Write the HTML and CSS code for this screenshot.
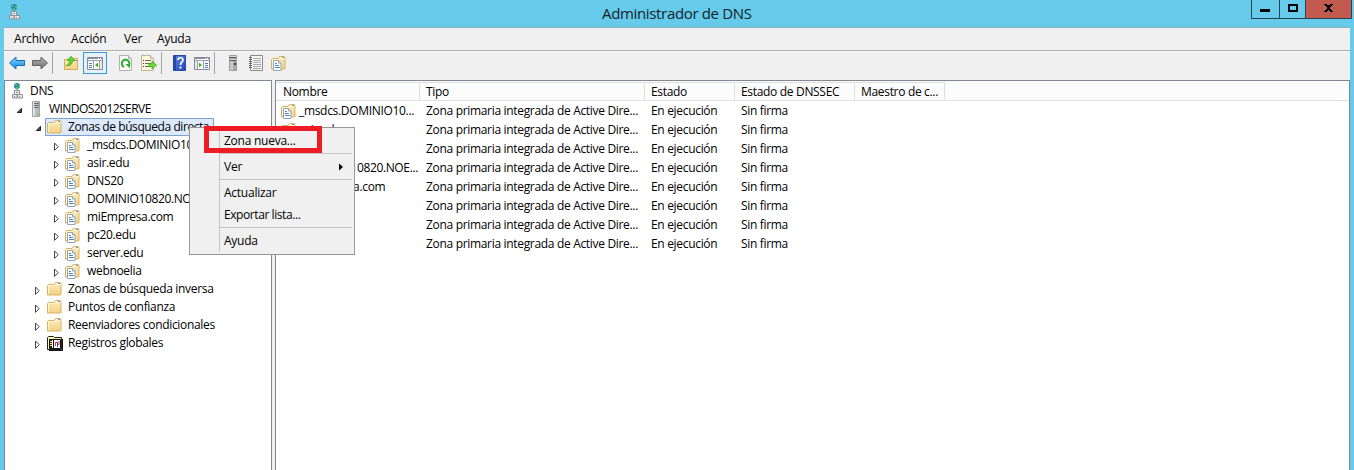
FILE: index.html
```html
<!DOCTYPE html>
<html lang="es">
<head>
<meta charset="utf-8">
<title>Administrador de DNS</title>
<link rel="stylesheet" href="styles.css">
</head>
<body>
<svg class="defs" width="0" height="0">
  <defs>
    <linearGradient id="gold" x1="0" y1="0" x2="0" y2="1"><stop offset="0" stop-color="#fdedb8"/><stop offset="1" stop-color="#f3d184"/></linearGradient>
    <linearGradient id="steel" x1="0" y1="0" x2="1" y2="0"><stop offset="0" stop-color="#d4d7d9"/><stop offset="1" stop-color="#84888b"/></linearGradient>
    <linearGradient id="blue" x1="0" y1="0" x2="0" y2="1"><stop offset="0" stop-color="#7fd4ff"/><stop offset="1" stop-color="#118be0"/></linearGradient>
    <linearGradient id="gray" x1="0" y1="0" x2="0" y2="1"><stop offset="0" stop-color="#b4b4b4"/><stop offset="1" stop-color="#6f6f6f"/></linearGradient>
    <linearGradient id="book" x1="0" y1="0" x2="1" y2="1"><stop offset="0" stop-color="#5d8be6"/><stop offset="1" stop-color="#2145ae"/></linearGradient>
  </defs>
  <symbol id="dns" viewBox="0 0 16 16">
    <circle cx="8" cy="3" r="3" fill="#2a7fb4"/><path d="M6 1h2v2H6zM9 2h2v2H9zM7 4h2v2H7z" fill="#45c35c"/><path d="M8 6v2" stroke="#777"/>
    <path d="M5.500 7.500h5v4h-5zM3.500 11.500h4.500v3.500h-4.500zM8.500 11.500h5v3.500H8.500z" fill="#eceaf0" stroke="#908e97"/><path d="M7 9.500h2M5 13.500h1M10 13.500h1" stroke="#8a8790"/>
  </symbol>
  <symbol id="server" viewBox="0 0 16 16">
    <path d="M4.500.5h7v15h-7z" fill="#b9bcbe" stroke="#a0a4a6"/><path d="M5 1h2v14H5z" fill="#dfe2e3"/><path d="M6 2.500h5M6 4.500h5M6 6.500h5" stroke="#6d7173"/><path d="M9 13h2v1H9z" fill="#66dd27"/>
  </symbol>
  <symbol id="folder" viewBox="0 0 16 16">
    <path d="M.5 4.500l1-1H7l1.500-2h5l.5 1v11l-.5.500H.5z" fill="url(#gold)" stroke="#d9b264"/><path d="M9 2.500h4" stroke="#fff"/><path d="M11 2.500h2" stroke="#579ad2"/><path d="M1.500 13V4.500h6l1-1h5" fill="none" stroke="#fff6d6"/>
  </symbol>
  <symbol id="zone" viewBox="0 0 16 16">
    <path d="M.5 4.500l1-1H7l1.500-2h5l.5 1v11l-.5.500H.5z" fill="url(#gold)" stroke="#d9b264"/><path d="M9 2.500h4" stroke="#fff"/><path d="M11 2.500h2" stroke="#579ad2"/><path d="M1.500 13V4.500h6l1-1h5" fill="none" stroke="#fff6d6"/>
    <path d="M2.500 5.500h5l2.500 2.500v7.500H2.500z" fill="#fff" stroke="#93a5b6"/><path d="M7.500 5.500V8H10" fill="#dce8f2" stroke="#93a5b6"/><path d="M4 8.500h2M4 10.500h4M4 12.500h5" stroke="#4c86c8"/>
  </symbol>
  <symbol id="log" viewBox="0 0 16 16">
    <path d="M.5 2.500l1-1h5l1 1h7v12H.5z" fill="#fff7a8" stroke="#222"/><path d="M2.500 4.500h11v9h-11z" fill="#fff" stroke="#111"/><path d="M3 5h2v8H3z" fill="#222"/><path d="M3 6.500h2M3 8.500h2M3 10.500h2" stroke="#ffe95a"/><path d="M6.500 5v8" stroke="#111"/><path d="M8.500 11V7.500H10" fill="none" stroke="#d32"/><path d="M10.500 12V7" fill="none" stroke="#24c"/><path d="M11 9.500h1V6" fill="none" stroke="#d32"/><path d="M15.500 4v11.500H2" fill="none" stroke="#111"/>
  </symbol>
  <symbol id="back" viewBox="0 0 16 16"><path d="M.5 8L7 2v3.500h8.500v5H7V14z" fill="url(#blue)" stroke="#176fbb"/></symbol>
  <symbol id="forward" viewBox="0 0 16 16"><path d="M15.500 8L9 2v3.500H.5v5H9V14z" fill="url(#gray)" stroke="#636363"/></symbol>
  <symbol id="up" viewBox="0 0 16 16">
    <path d="M1.500 4.500h6l1-1h6v11h-13z" fill="url(#gold)" stroke="#d4ac5e"/><path d="M11 5.500h3" stroke="#5c9ed4"/><path d="M3 10.500c2.500-.5 3.500-2 3.500-5H4L8 1.300l4 4.200H9.500c0 4-2.500 5.500-6.500 5z" fill="#60d52e" stroke="#35a220" stroke-width=".7"/>
  </symbol>
  <symbol id="pane" viewBox="0 0 16 16">
    <path d="M.5 2.500h15v12H.5z" fill="#fff" stroke="#858b99"/><path d="M1 3.500h14" stroke="#858b99"/><path d="M11 3.500h1M13 3.500h1" stroke="#fff"/><path d="M1 5.500h14M6.500 6v9M12.500 6v9" stroke="#9aa0ac"/><path d="M2 8.500h3M2 10.500h3M2 12.500h3" stroke="#467fc2"/><path d="M11 7.500v5L8 10z" fill="#3eaf29"/><path d="M13 6h2v8h-2z" fill="#e8e9eb"/>
  </symbol>
  <symbol id="action" viewBox="0 0 16 16">
    <path d="M.5 2.500h15v12H.5z" fill="#fff" stroke="#858b99"/><path d="M1 3.500h14" stroke="#858b99"/><path d="M11 3.500h1M13 3.500h1" stroke="#fff"/><path d="M1 5.500h14M3.500 6v9M9.500 6v9" stroke="#9aa0ac"/><path d="M1 6h2v8H1z" fill="#e8e9eb"/><path d="M11 8.500h3M11 10.500h3M11 12.500h3" stroke="#467fc2"/><path d="M5 7.500v5L8 10z" fill="#3eaf29"/>
  </symbol>
  <symbol id="refresh" viewBox="0 0 16 16">
    <path d="M1.500.5h9l3 3v12h-12z" fill="#fbfbfb" stroke="#b0b0b0"/><path d="M10.500.5v3h3" fill="#ddd" stroke="#b0b0b0"/><path d="M6 12a3.800 3.800 0 1 1 4.500-1" fill="none" stroke="#2cae2a" stroke-width="2"/><path d="M7.500 9H12v4.500z" fill="#2cae2a"/>
  </symbol>
  <symbol id="export" viewBox="0 0 16 16">
    <path d="M.5.5h9l3 3v12H.5z" fill="#fff7d9" stroke="#bcb596"/><path d="M9.500.5v3h3" fill="#ece2ba" stroke="#bcb596"/><path d="M2 5.500h1M2 8.500h1M2 11.500h1" stroke="#333"/><path d="M4 5.500h6M4 8.500h4M4 11.500h4" stroke="#696969"/><path d="M8 8.500h3V6l4.500 4-4.500 4v-2.500H8z" fill="#69d838" stroke="#3da522" stroke-width=".8"/>
  </symbol>
  <symbol id="help" viewBox="0 0 16 16">
    <path d="M2.500.5h12v15h-12z" fill="url(#book)" stroke="#2748a6"/><path d="M3 1h2v14H3z" fill="#244ba8"/><path d="M7 5c0-3 5-3 5 0 0 2-2.500 2-2.500 5" fill="none" stroke="#fff" stroke-width="1.700"/><path d="M8.500 11.500h2v2h-2z" fill="#fff"/>
  </symbol>
  <symbol id="tower" viewBox="0 0 16 16">
    <path d="M4.500.5h7v15h-7z" fill="#a9a9a9" stroke="#9b9b9b"/><path d="M5 5h3v10H5z" fill="#c8c8c8"/><path d="M5 2.500h6M5 5.500h6" stroke="#555"/><path d="M5 1.500h6M5 4.500h6" stroke="#ddd"/><path d="M9 8h2v2H9z" fill="#444"/>
  </symbol>
  <symbol id="notes" viewBox="0 0 16 16">
    <path d="M2.500.5h12v15h-12z" fill="#f6f6f6" stroke="#8b8b8b"/><path d="M5 3.500h8M5 5.500h8M5 7.500h8M5 9.500h8M5 11.500h8M5 13.500h8" stroke="#aaa"/><path d="M1 2.500h3M1 4.500h3M1 6.500h3M1 8.500h3M1 10.500h3M1 12.500h3" stroke="#666"/>
  </symbol>
  <symbol id="open" viewBox="0 0 8 10"><path d="M6.500 2.300v4.200H2.300z" fill="#555" stroke="#222"/></symbol>
  <symbol id="closed" viewBox="0 0 8 10"><path d="M1.500 1l3.700 3.700-3.700 3.700z" fill="#fff" stroke="#444"/></symbol>
</svg>

<div class="window">
  <header class="titlebar">
    <svg class="icon app-icon"><use href="#dns"/></svg>
    <h1 class="title">Administrador de DNS</h1>
    <div class="controls">
      <span class="control minimize"><i></i></span>
      <span class="control maximize"><i></i></span>
      <span class="control close"><svg width="9" height="8" viewBox="0 0 9 8"><path d="M0 0h3v1h3V0h3v1H8v1H7v1H6v2h1v1h1v1h1v1H6V7H5V6H4v1H3v1H0V7h1V6h1V5h1V3H2V2H1V1H0z"/></svg></span>
    </div>
  </header>

  <div class="frame">
    <nav class="menubar"><span class="m-archivo">Archivo</span><span class="m-accion">Acción</span><span class="m-ver">Ver</span><span>Ayuda</span></nav>
    <div class="toolbar">
      <svg class="icon"><use href="#back"/></svg>
      <svg class="icon gap-next"><use href="#forward"/></svg>
      <b class="sep"></b>
      <svg class="icon gap-up"><use href="#up"/></svg>
      <span class="pressed"><svg class="icon"><use href="#pane"/></svg></span>
      <svg class="icon gap-refresh"><use href="#refresh"/></svg>
      <svg class="icon gap-next"><use href="#export"/></svg>
      <b class="sep"></b>
      <svg class="icon gap-help"><use href="#help"/></svg>
      <svg class="icon gap-tool"><use href="#action"/></svg>
      <b class="sep"></b>
      <svg class="icon gap-tower"><use href="#tower"/></svg>
      <svg class="icon gap-next"><use href="#notes"/></svg>
      <svg class="icon gap-zone"><use href="#zone"/></svg>
    </div>

    <main class="panes">
      <section class="tree">
        <div class="node l0"><svg class="icon"><use href="#dns"/></svg><span class="label">DNS</span></div>
        <div class="node l1"><svg class="arrow"><use href="#open"/></svg><svg class="icon"><use href="#server"/></svg><span class="label server-name">WINDOS2012SERVE</span></div>
        <div class="node l2"><svg class="arrow"><use href="#open"/></svg><span class="selected"><svg class="icon"><use href="#folder"/></svg><span class="label">Zonas de búsqueda directa</span></span></div>
        <div class="node l3"><svg class="arrow"><use href="#closed"/></svg><svg class="icon"><use href="#zone"/></svg><span class="label caps">_msdcs.DOMINIO10820</span></div>
        <div class="node l3"><svg class="arrow"><use href="#closed"/></svg><svg class="icon"><use href="#zone"/></svg><span class="label">asir.edu</span></div>
        <div class="node l3"><svg class="arrow"><use href="#closed"/></svg><svg class="icon"><use href="#zone"/></svg><span class="label caps">DNS20</span></div>
        <div class="node l3"><svg class="arrow"><use href="#closed"/></svg><svg class="icon"><use href="#zone"/></svg><span class="label caps">DOMINIO10820.NOELIA</span></div>
        <div class="node l3"><svg class="arrow"><use href="#closed"/></svg><svg class="icon"><use href="#zone"/></svg><span class="label">miEmpresa.com</span></div>
        <div class="node l3"><svg class="arrow"><use href="#closed"/></svg><svg class="icon"><use href="#zone"/></svg><span class="label">pc20.edu</span></div>
        <div class="node l3"><svg class="arrow"><use href="#closed"/></svg><svg class="icon"><use href="#zone"/></svg><span class="label">server.edu</span></div>
        <div class="node l3"><svg class="arrow"><use href="#closed"/></svg><svg class="icon"><use href="#zone"/></svg><span class="label">webnoelia</span></div>
        <div class="node l2"><svg class="arrow"><use href="#closed"/></svg><svg class="icon"><use href="#folder"/></svg><span class="label">Zonas de búsqueda inversa</span></div>
        <div class="node l2"><svg class="arrow"><use href="#closed"/></svg><svg class="icon"><use href="#folder"/></svg><span class="label">Puntos de confianza</span></div>
        <div class="node l2"><svg class="arrow"><use href="#closed"/></svg><svg class="icon"><use href="#folder"/></svg><span class="label">Reenviadores condicionales</span></div>
        <div class="node l2"><svg class="arrow"><use href="#closed"/></svg><svg class="icon"><use href="#log"/></svg><span class="label">Registros globales</span></div>
      </section>

      <section class="list">
        <div class="row head"><span>Nombre</span><span>Tipo</span><span>Estado</span><span>Estado de DNSSEC</span><span>Maestro de c...</span></div>
        <div class="row"><span class="name"><svg class="icon"><use href="#zone"/></svg>_msdcs.DOMINIO10...</span><span>Zona primaria integrada de Active Dire...</span><span>En ejecución</span><span>Sin firma</span></div>
        <div class="row"><span class="name"><svg class="icon"><use href="#zone"/></svg>asir.edu</span><span>Zona primaria integrada de Active Dire...</span><span>En ejecución</span><span>Sin firma</span></div>
        <div class="row"><span class="name"><svg class="icon"><use href="#zone"/></svg>DNS20</span><span>Zona primaria integrada de Active Dire...</span><span>En ejecución</span><span>Sin firma</span></div>
        <div class="row"><span class="name caps"><svg class="icon"><use href="#zone"/></svg>DOMINIO10820.NOE...</span><span>Zona primaria integrada de Active Dire...</span><span>En ejecución</span><span>Sin firma</span></div>
        <div class="row"><span class="name"><svg class="icon"><use href="#zone"/></svg>miEmpresa.com</span><span>Zona primaria integrada de Active Dire...</span><span>En ejecución</span><span>Sin firma</span></div>
        <div class="row"><span class="name"><svg class="icon"><use href="#zone"/></svg>pc20.edu</span><span>Zona primaria integrada de Active Dire...</span><span>En ejecución</span><span>Sin firma</span></div>
        <div class="row"><span class="name tight"><svg class="icon"><use href="#zone"/></svg>server.edu</span><span>Zona primaria integrada de Active Dire...</span><span>En ejecución</span><span>Sin firma</span></div>
        <div class="row"><span class="name"><svg class="icon"><use href="#zone"/></svg>webnoelia</span><span>Zona primaria integrada de Active Dire...</span><span>En ejecución</span><span>Sin firma</span></div>
      </section>
    </main>
  </div>

  <div class="context-menu">
    <div class="item">Zona nueva...</div>
    <hr>
    <div class="item">Ver<svg class="more" width="5" height="8" viewBox="0 0 5 8"><path d="M0 .5L4 4 0 7.500z"/></svg></div>
    <hr>
    <div class="item">Actualizar</div>
    <div class="item export">Exportar lista...</div>
    <hr>
    <div class="item">Ayuda</div>
  </div>
  <div class="highlight"></div>
</div>
</body>
</html>
```
FILE: styles.css
```css
* { box-sizing: border-box; }
body { margin: 0; overflow: hidden; }
.defs { position: absolute; }
svg { display: block; flex: none; }
.window {
  position: relative; width: 1354px; height: 470px; overflow: hidden;
  display: flex; flex-direction: column; background: #66cbea;
  font: 12px/18px "Open Sans", "Noto Sans", sans-serif; letter-spacing: -.32px; color: #000; white-space: nowrap;
}
.icon { width: 16px; height: 16px; }

.titlebar { display: flex; height: 27px; padding: 0 2px 0 6px; align-items: flex-start; }
.app-icon { margin-top: 4px; }
.title { flex: 1; margin: 0 0 0 580px; font-size: 15px; font-weight: 400; line-height: 26px; letter-spacing: -.34px; color: #10222a; }
.controls { display: flex; width: 101px; height: 19px; border: 1px solid #27434d; border-top: 0; }
.control { display: flex; justify-content: center; border-right: 1px solid #27434d; }
.minimize { width: 28px; padding: 9px 1px 0 0; }
.minimize i { width: 10px; height: 3px; background: #000; }
.maximize { width: 26px; padding-top: 4px; }
.maximize i { width: 10px; height: 8px; border: 2px solid #000; }
.close { flex: 1; padding-top: 4px; background: #c35a50; border-right: 0; }

.frame { flex: 1; margin: 0 4px; display: flex; flex-direction: column; background: #f0f0f0; border-top: 1px solid #88b1bf; }
.menubar { display: flex; height: 23px; padding: 2px 10px; gap: 16px; border-bottom: 1px solid #adadad; letter-spacing: -.2px; }
.m-archivo { width: 41px; }
.m-accion { width: 37px; }
.m-ver { width: 17px; }

.toolbar { display: flex; height: 29px; padding: 3px 5px; border-top: 1px solid #fbfbfb; align-items: flex-start; }
.sep { width: 1px; height: 22px; margin: -3px 0 0 4px; background: #a5a5a5; }
.gap-next { margin-left: 7px; }
.gap-up { margin-left: 10px; }
.pressed { display: flex; width: 24px; height: 22px; margin: -3px 0 0 4px; padding: 2px 3px; border: 1px solid #3399d8; background: #e4f1fa; }
.gap-refresh { margin-left: 11px; }
.gap-help { margin-left: 9px; }
.gap-tool { margin-left: 7px; }
.gap-tower { margin-left: 10px; }
.gap-zone { margin-left: 7px; }

.panes { flex: 1; display: grid; grid-template-columns: 268px 1fr; gap: 3px; }
.tree, .list { background: #fff; border: 1px solid #828790; border-bottom: 0; }
.tree { padding-top: 1px; }
.node { display: flex; height: 18px; align-items: center; }
.label { margin-left: 5px; }
.caps { letter-spacing: -.36px; }
.server-name { letter-spacing: -.55px; }
.arrow { width: 8px; height: 10px; margin: 3px 5px 0 0; }
.l0 { padding-left: 4px; }
.l1 { padding-left: 10px; }
.l2 { padding-left: 29px; }
.l3 { padding-left: 48px; }
.l3 .icon { margin-left: -1px; margin-right: 1px; }
.selected { display: flex; align-items: center; width: 169px; height: 18px; margin-left: -2px; padding-left: 1px; border: 1px solid #7da2ce; background: #dceafc; letter-spacing: -.43px; }

.row { display: grid; grid-template-columns: 144px 225px 90px 120px 90px; height: 19px; line-height: 19px; padding-left: 6px; }
.row.head { grid-template-columns: 144px 225px 90px 120px 90px; height: 20px; padding: 0; background: #fcfcfc; border-bottom: 1px solid #dedfe1; }
.row.head span { height: 18px; margin-top: 1px; padding-left: 6px; line-height: 18px; border-top: 1px solid #dedfe1; box-shadow: inset -1px 0 #dedfe1; }
.row.head span:first-child { padding-left: 7px; }
.name { display: flex; align-items: center; gap: 3px; margin-left: -2px; }
.name .icon { margin-left: 1px; margin-right: -1px; }
.tight { letter-spacing: -.45px; }

.context-menu {
  position: absolute; left: 189px; top: 127px; width: 166px; height: 128px; padding: 2px 2px 2px 30px; border: 1px solid #979797;
  background: linear-gradient(90deg, transparent 29px, #c4c4c4 29px, #c4c4c4 30px, transparent 30px) 0 2px / 100% 122px no-repeat #f0f0f0;
}
.item { display: flex; align-items: center; height: 22px; padding-left: 4px; letter-spacing: -.25px; }
.export { letter-spacing: -.42px; }
.more { margin-left: auto; margin-right: 8px; }
.context-menu hr { height: 1px; margin: 1px 0 2px; border: 0; background: #c4c4c4; }
.highlight { position: absolute; left: 204px; top: 126px; width: 118px; height: 27px; border: 5px solid #ed1c24; }
```
